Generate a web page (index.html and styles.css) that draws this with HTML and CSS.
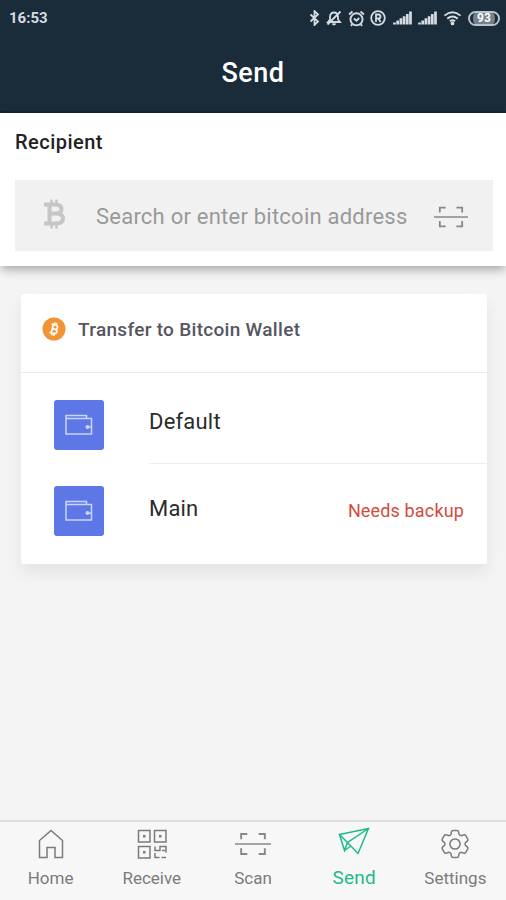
FILE: index.html
```html
<!DOCTYPE html>
<html lang="en">
<head>
<meta charset="utf-8">
<title>Send</title>
<link rel="stylesheet" href="styles.css">
</head>
<body>
<svg class="defs" aria-hidden="true">
  <symbol id="scan" viewBox="0 0 38 24"><path class="beam" d="M0 12H38"/><path d="M6.500 7V1.500H13M25 1.500H31.500V7M6.500 16.500V22.500H13M25 22.500H31.500V16.500"/></symbol>
  <symbol id="wallet" viewBox="0 0 28 22"><path d="M21.500 4.500V1.500H1V20H26.500V4.500H1M26.500 10.500V15.500"/><circle cx="22.500" cy="13" r="2" fill="currentColor" stroke="none"/><path d="M22.500 13H26.500"/></symbol>
  <symbol id="signal" viewBox="0 0 19 14"><path d="M1.500 13.500V11.500M4.700 13.500V9.500M7.900 13.500V7.300M11.100 13.500V5.200M14.300 13.500V3M17.500 13.500V.5"/></symbol>
</svg>
<div class="screen">
  <header class="header">
    <div class="status">
      <span class="clock">16:53</span>
      <div class="indicators">
        <svg class="bt" viewBox="0 0 10 16"><path d="M1 4.500L8.500 11.500L5 15V1L8.500 4.500L1 11.500"/></svg>
        <svg class="mute" viewBox="0 0 16 16"><path d="M2 12L4 9.500V6.500Q4.500 2.500 8 2.500T12 6.500V9.500L14 12ZM6.500 13.500Q8 15.500 9.500 13.500M14.500 1.500L1.500 14.500"/></svg>
        <svg class="alarm" viewBox="0 0 16 16"><circle cx="8" cy="8.800" r="5.700"/><path d="M1 4.200L4.200 1.500M15 4.200L11.800 1.500M5.500 8L8 10L10.500 7.500M4 13.500L2.700 15M12 13.500L13.300 15"/></svg>
        <svg class="reg" viewBox="0 0 16 16"><circle cx="8" cy="8" r="6.800"/><path d="M6 12V4.500H8.500A2 2 0 0 1 8.500 8.500H6M8.500 8.500L10.500 12"/></svg>
        <svg class="signal"><use href="#signal"/></svg>
        <svg class="signal second"><use href="#signal"/></svg>
        <svg class="wifi" viewBox="0 0 20 16"><path d="M1.500 5.500Q10-1.500 18.500 5.500M4.500 8.700Q10 4 15.500 8.700M7.300 11.500Q10 9.300 12.700 11.500"/><circle cx="10" cy="13.700" r="1"/></svg>
        <span class="battery">93</span>
      </div>
    </div>
    <h1 class="title">Send</h1>
  </header>

  <section class="recipient">
    <h2 class="label">Recipient</h2>
    <div class="search">
      <svg class="coin" viewBox="0 0 22 30"><path d="M1 5.500H12Q18.500 5.500 18.500 10Q18.500 14 13.500 14.500H7M13.500 14.500Q20 15 20 19.500Q20 24.500 12.500 24.500H1M6.500 5.500V24.500"/><path class="tick" d="M8.500 .5V5M13.500 .5V5M8.500 25V29.500M13.500 25V29.500"/></svg>
      <span class="placeholder">Search or enter bitcoin address</span>
      <svg class="scan"><use href="#scan"/></svg>
    </div>
  </section>

  <main class="content">
    <section class="card">
      <div class="card-head">
        <svg class="badge" viewBox="0 0 24 24"><circle cx="12" cy="12" r="11.500"/><g transform="rotate(14 12 12)"><path d="M8.500 7.800H12.500Q15 7.800 15 9.900T12.500 12H10.300M12.500 12Q15.500 12 15.500 14.200T12.500 16.400H8.500M10.300 7.800V16.400M11.300 5.500V7.800M13.300 5.500V7.800M11.300 16.400V18.700M13.300 16.400V18.700"/></g></svg>
        <span class="card-title">Transfer to Bitcoin Wallet</span>
      </div>
      <div class="wallet">
        <div class="tile"><svg><use href="#wallet"/></svg></div>
        <div class="wallet-body"><span class="name">Default</span></div>
      </div>
      <div class="wallet last">
        <div class="tile"><svg><use href="#wallet"/></svg></div>
        <div class="wallet-body"><span class="name">Main</span><span class="warning">Needs backup</span></div>
      </div>
    </section>
  </main>

  <nav class="tabs">
    <div class="tab home"><div class="icon"><svg width="26" height="30" viewBox="0 0 26 30"><path d="M1.500 28.500V11.500L13 1.500L24.500 11.500V28.500H17V18.500H9V28.500Z"/></svg></div><span>Home</span></div>
    <div class="tab receive"><div class="icon"><svg width="30" height="30" viewBox="0 0 30 30"><path d="M1.500 1.500H13V13H1.500ZM17.500 1.500H29V13H17.500ZM1.500 17.500H13V29H1.500Z"/><path d="M18 17.500V21.500H23V17.500H29V23.500M28 21.500H25M18 24V28.500H22.500M24.500 28.500H29"/><path class="dot" d="M6 6H8.500V8.500H6ZM22 6H24.500V8.500H22ZM6 22H8.500V24.500H6Z"/></svg></div><span>Receive</span></div>
    <div class="tab"><div class="icon"><svg class="scan"><use href="#scan"/></svg></div><span>Scan</span></div>
    <div class="tab active"><div class="icon"><svg width="32" height="28" viewBox="0 0 32 28"><path d="M1.500 7.500L30.500 1.500L20 26.500L9.500 15.500ZM1.500 7.500L6.500 23.500L9.500 15.500L30.500 1.500M6.500 23.500L13 19"/></svg></div><span>Send</span></div>
    <div class="tab settings"><div class="icon"><svg class="gear" width="36" height="36" viewBox="0 0 24 24"><path d="M9.594 3.940c.09-.542.56-.94 1.110-.94h2.593c.55 0 1.020.398 1.110.94l.213 1.281c.063.374.313.686.645.87.074.04.147.083.22.127.325.196.72.257 1.075.124l1.217-.456a1.125 1.125 0 0 1 1.370.49l1.296 2.247a1.125 1.125 0 0 1-.26 1.431l-1.003.827c-.293.241-.438.613-.43.992a7.723 7.723 0 0 1 0 .255c-.008.378.137.75.43.991l1.004.827c.424.35.534.955.26 1.430l-1.298 2.247a1.125 1.125 0 0 1-1.369.491l-1.217-.456c-.355-.133-.75-.072-1.076.124a6.470 6.470 0 0 1-.22.128c-.331.183-.581.495-.644.869l-.213 1.281c-.09.543-.56.94-1.110.94h-2.594c-.55 0-1.019-.398-1.110-.94l-.213-1.281c-.062-.374-.312-.686-.644-.87a6.520 6.520 0 0 1-.22-.127c-.325-.196-.72-.257-1.076-.124l-1.217.456a1.125 1.125 0 0 1-1.369-.49l-1.297-2.247a1.125 1.125 0 0 1 .26-1.431l1.004-.827c.292-.24.437-.613.43-.991a6.932 6.932 0 0 1 0-.255c.007-.38-.138-.751-.43-.992l-1.004-.827a1.125 1.125 0 0 1-.26-1.430l1.297-2.247a1.125 1.125 0 0 1 1.370-.491l1.216.456c.356.133.751.072 1.076-.124.072-.044.146-.086.22-.128.332-.183.582-.495.644-.869l.214-1.280Z"/><circle cx="12" cy="12" r="3.400"/></svg></div><span>Settings</span></div>
  </nav>
</div>
</body>
</html>
```
FILE: styles.css
```css
* { box-sizing: border-box; }
body { margin: 0; font-family: Roboto, "Liberation Sans", sans-serif; }
h1, h2 { margin: 0; }
svg { display: block; flex: none; fill: none; stroke: currentColor; stroke-width: 1.5; }
.defs { width: 0; height: 0; position: absolute; }
.screen { height: 900px; display: flex; flex-direction: column; background: #f4f4f4; overflow: hidden; }

.header { height: 113px; background: #1a2b3a; border-bottom: 2px solid #14232c; color: #fff; flex: none; }
.status { height: 36px; display: flex; align-items: center; justify-content: space-between; padding: 0 6px 0 9px; color: #d5dce1; }
.clock { font-size: 15px; font-weight: 700; line-height: 36px; }
.indicators { display: flex; align-items: center; height: 34px; }
.bt { width: 11px; height: 16px; margin-right: 6px; stroke-width: 1.8; }
.mute { width: 16px; height: 16px; margin-right: 6px; stroke-width: 1.8; }
.alarm { width: 17px; height: 17px; margin-right: 5px; stroke-width: 1.8; }
.reg { width: 16px; height: 16px; margin-right: 7px; stroke-width: 1.8; }
.signal { width: 19px; height: 14px; stroke-width: 2.7; margin-right: 6px; }
.wifi { width: 19px; height: 16px; margin-right: 6px; stroke-width: 2; }
.battery { width: 32px; height: 15px; border: 2px solid #b9c3ca; border-radius: 8px; background: #75818b; background-clip: content-box; padding: 0 3px; color: #fff; font-size: 12px; font-weight: 700; line-height: 11px; text-align: center; }
.title { height: 75px; line-height: 75px; text-align: center; font-size: 27px; font-weight: 500; letter-spacing: .5px; }

.recipient { flex: none; height: 153px; padding: 17px 13px 0 15px; background: #fff; box-shadow: 0 5px 9px -1px rgba(0,0,0,.3); position: relative; }
.label { font-size: 20px; line-height: 25px; font-weight: 500; color: #222; letter-spacing: .48px; }
.search { margin-top: 25px; height: 71px; background: #f1f1f1; display: flex; align-items: center; padding: 1px 25px 0 28px; color: #999; }
.coin { width: 22px; height: 30px; margin-top: -5px; color: #c6c6c6; stroke-width: 4; }
.tick { stroke-width: 2.5; }
.placeholder { margin-left: 31px; font-size: 22px; letter-spacing: .23px; white-space: nowrap; flex: 1; }
.scan { width: 36px; height: 24px; stroke-width: 2; color: #888; }
.search .scan { width: 34px; height: 22px; margin-top: 2px; }
.beam { stroke-width: 1.5; }

.content { flex: 1; padding: 28px 19px 0 21px; }
.card { height: 270px; background: #fff; border-radius: 2px; box-shadow: 0 9px 16px rgba(0,0,0,.07); }
.card-head { height: 79px; display: flex; align-items: center; padding: 0 21px 8px; border-bottom: 1px solid #ececec; }
.badge { width: 24px; height: 24px; stroke: #fff; stroke-width: 1.7; }
.badge circle { fill: #f29434; stroke: none; }
.card-title { margin-left: 12px; font-size: 19px; font-weight: 500; letter-spacing: .3px; color: #565660; }
.wallet { height: 91px; display: flex; padding-left: 33px; }
.tile { width: 50px; height: 50px; margin: 27px 45px 0 0; flex: none; border-radius: 3px; background: #5d77e6; display: flex; align-items: center; justify-content: center; color: #c9d5fb; }
.tile svg { width: 28px; height: 22px; }
.wallet-body { flex: 1; display: flex; justify-content: space-between; align-items: center; margin-right: -4px; padding: 6px 27px 0 0; border-bottom: 1px solid #eee; color: #2b2b2b; }
.name { font-size: 22px; letter-spacing: .2px; }
.warning { font-size: 18px; letter-spacing: .15px; color: #d44b3d; padding-top: 4px; }
.last .tile { margin-top: 22px; }
.last .wallet-body { border: 0; padding: 0 27px 2px 0; }

.tabs { height: 80px; flex: none; display: grid; grid-template-columns: repeat(5, 1fr); background: #f7f7f7; border-top: 2px solid #dfdfdf; color: #7b7b7b; }
.tab { display: flex; flex-direction: column; align-items: center; font-size: 17px; line-height: 20px; }
.icon { height: 44px; margin-bottom: 2px; display: flex; align-items: center; justify-content: center; }
.gear { stroke-width: 1; }
.dot { fill: currentColor; stroke: none; }
.active { color: #1dba8b; font-size: 19px; }
.active .icon { height: 38px; margin-bottom: 8px; }
.active span { letter-spacing: .2px; }
```
